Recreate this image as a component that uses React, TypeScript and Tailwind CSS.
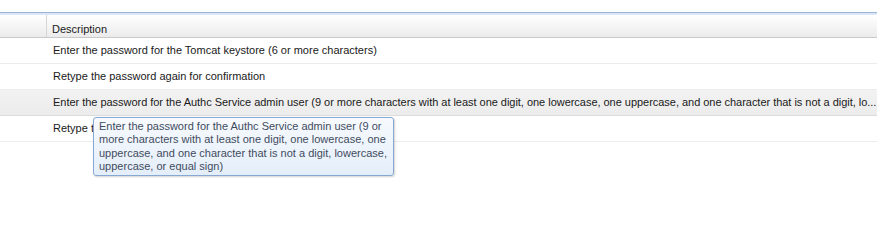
import React from "react";

const rows = [
  "Enter the password for the Tomcat keystore (6 or more characters)",
  "Retype the password again for confirmation",
  "Enter the password for the Authc Service admin user (9 or more characters with at least one digit, one lowercase, one uppercase, and one character that is not a digit, lo...",
  "Retype the password again for confirmation",
];

const tipLines = [
  "Enter the password for the Authc Service admin user (9 or",
  "more characters with at least one digit, one lowercase, one",
  "uppercase, and one character that is not a digit, lowercase,",
  "uppercase, or equal sign)",
];

export default function App() {
  return (
    <div className="relative w-[877px] h-[251px] bg-white overflow-hidden font-['Liberation_Sans',Arial,sans-serif] text-[11px] text-[#1a1a1a]">
      <div className="h-[12px]" />
      <div className="h-px bg-[#98b4d9]" />
      <div className="h-[2px] bg-[#dbe7f5]" />
      {/* header */}
      <div className="flex h-[23px] bg-gradient-to-b from-[#ffffff] to-[#ebebeb] border-b border-[#c9c9c9]">
        <div className="w-[47px] border-r border-[#d6d6d6]" />
        <div className="flex items-center pl-[5px] pt-[6px]">Description</div>
      </div>
      {/* rows */}
      {rows.map((text, i) => (
        <div
          key={i}
          className={
            i === 2
              ? "flex h-[26px] border-b border-[#dcdcdc] bg-gradient-to-b from-[#f2f2f2] to-[#ececec]"
              : "flex h-[26px] border-b border-[#ececec]"
          }
        >
          <div className="w-[48px] shrink-0" />
          <div className="flex items-center pl-[5px] min-w-0 flex-1 overflow-hidden">
            <span className={i === 2 ? "whitespace-nowrap tracking-[-0.03px]" : "whitespace-nowrap"}>{text}</span>
          </div>
        </div>
      ))}

      {/* tooltip */}
      <div className="absolute left-[93px] top-[117px] w-[301px] h-[59px] rounded-[3px] border border-[#86a8d2] bg-gradient-to-b from-[#f7fafe] to-[#e4eefa] shadow-[1px_1px_2px_rgba(0,0,0,0.18)] pl-[5px] pt-[2px] text-[11px] leading-[13.3px] text-[#3f4c5e] whitespace-nowrap">
        {tipLines.map((l, i) => (
          <div key={i}>{l}</div>
        ))}
      </div>
    </div>
  );
}
